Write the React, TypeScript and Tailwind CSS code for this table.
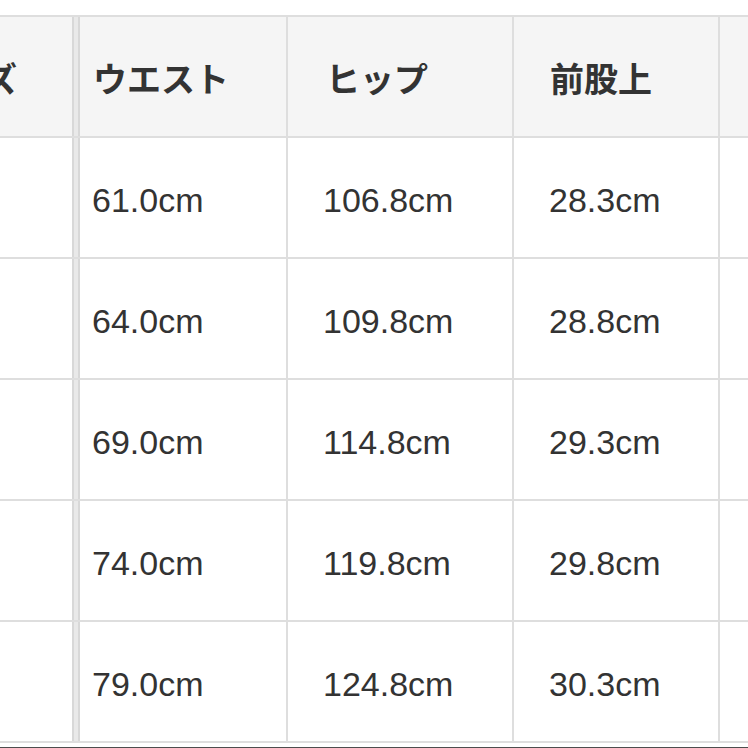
const rows = [
  ["61.0cm", "106.8cm", "28.3cm"],
  ["64.0cm", "109.8cm", "28.8cm"],
  ["69.0cm", "114.8cm", "29.3cm"],
  ["74.0cm", "119.8cm", "29.8cm"],
  ["79.0cm", "124.8cm", "30.3cm"],
];

const grid = "grid grid-cols-[72px_8px_208px_226px_206px_1fr] h-[121px] border-b-2 border-[#dedede]";
const jp = { fontFamily: '"Noto Sans CJK JP", "Liberation Sans", sans-serif' };
const num = { fontFamily: '"Liberation Sans", Arial, sans-serif' };

function Sep() {
  return <div className="border-x-2 border-[#d8d8d8] bg-[#e9e9e9]" />;
}

export default function App() {
  return (
    <div className="w-[748px] h-[748px] overflow-hidden bg-white pt-[15px] text-[#333]">
      <div className="border-t-2 border-[#dedede]">
        {/* header */}
        <div className={`${grid} bg-[#f5f5f5] text-[34px] font-bold`} style={jp}>
          <div className="flex items-center justify-end overflow-hidden whitespace-nowrap pr-[55px] pt-[2px]">
            サイズ
          </div>
          <Sep />
          <div className="flex items-center border-r-2 border-[#dedede] pl-[13px] pt-[2px]">ウエスト</div>
          <div className="flex items-center border-r-2 border-[#dedede] pl-[38px] pt-[2px]">ヒップ</div>
          <div className="flex items-center border-r-2 border-[#dedede] pl-[36px] pt-[2px]">前股上</div>
          <div />
        </div>

        {rows.map((r, i) => (
          <div key={i} className={`${grid} text-[34px]`} style={num}>
            <div />
            <Sep />
            <div className="flex items-center border-r-2 border-[#dedede] pl-[12px] pt-[6px]">{r[0]}</div>
            <div className="flex items-center border-r-2 border-[#dedede] pl-[35px] pt-[6px]">{r[1]}</div>
            <div className="flex items-center border-r-2 border-[#dedede] pl-[35px] pt-[6px]">{r[2]}</div>
            <div />
          </div>
        ))}
      </div>
      <div className="mt-[4px] h-[2px] bg-[#4d4d4d]" />
    </div>
  );
}
